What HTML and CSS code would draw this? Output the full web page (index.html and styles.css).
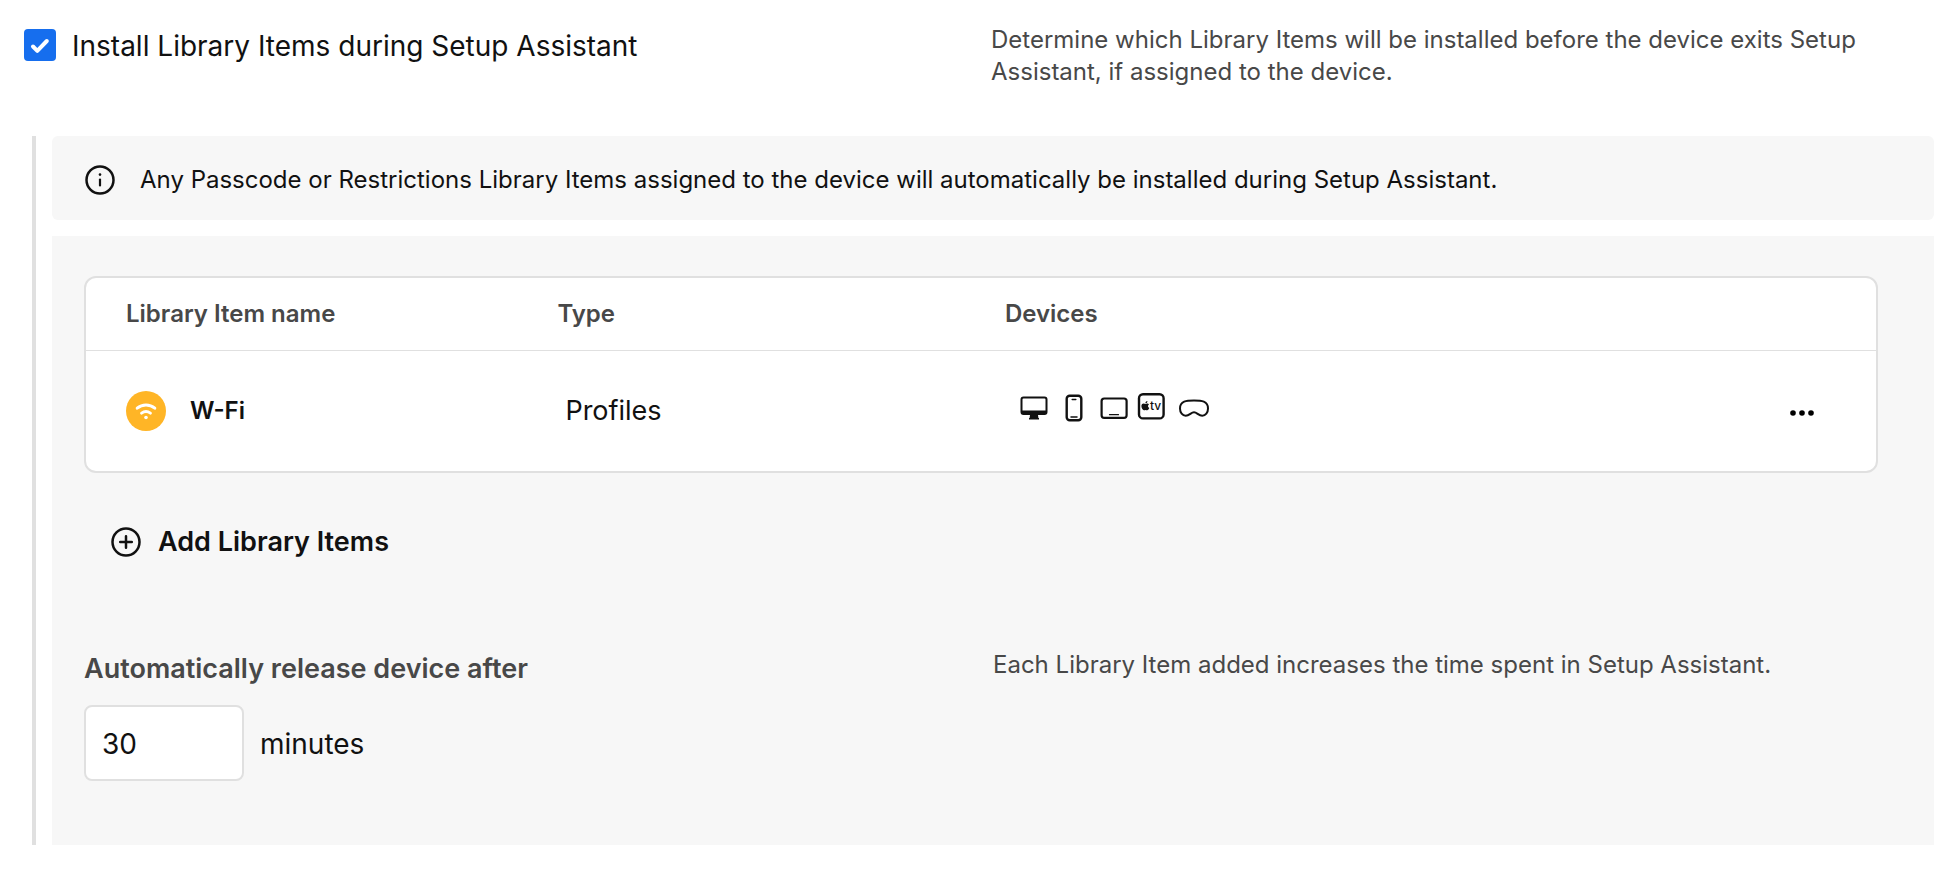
FILE: index.html
```html
<!DOCTYPE html>
<html lang="en">
<head>
    <meta charset="UTF-8">
    <meta name="viewport" content="width=device-width, initial-scale=1.0">
    <title>Setup Assistant</title>
    <link rel="stylesheet" href="styles.css">
</head>
<body>
    <div class="setting-row">
        <label class="check-label">
            <input type="checkbox" class="checkbox" checked>
            <span>Install Library Items during Setup Assistant</span>
        </label>
        <p class="description">Determine which Library Items will be installed before the device exits Setup Assistant, if assigned to the device.</p>
    </div>

    <div class="nested">
        <div class="notice">
            <svg class="icon" viewBox="0 0 30 30" aria-hidden="true">
                <circle cx="15" cy="15" r="13.5" fill="none" stroke="currentColor" stroke-width="2.5"/>
                <circle cx="15" cy="9.6" r="1.3" fill="currentColor"/>
                <path d="M15 14.5v6" stroke="currentColor" stroke-width="2.2" stroke-linecap="round"/>
            </svg>
            <p>Any Passcode or Restrictions Library Items assigned to the device will automatically be installed during Setup Assistant.</p>
        </div>

        <div class="panel">
            <div class="table-card">
                <table>
                    <thead>
                        <tr>
                            <th class="col-name">Library Item name</th>
                            <th class="col-type">Type</th>
                            <th class="col-devices">Devices</th>
                            <th class="col-actions"></th>
                        </tr>
                    </thead>
                    <tbody>
                        <tr>
                            <td>
                                <div class="item-name">
                                    <svg class="item-icon" viewBox="0 0 40 40" aria-hidden="true">
                                        <circle cx="20" cy="20" r="20" fill="#ffb526"/>
                                        <g fill="none" stroke="#fff" stroke-width="3" stroke-linecap="round">
                                            <path d="M11.2 17.2a13.5 13.5 0 0 1 17.6 0"/>
                                            <path d="M15.6 22.1a7.5 7.5 0 0 1 8.8 0"/>
                                        </g>
                                        <circle cx="20" cy="26.5" r="1.8" fill="#fff"/>
                                    </svg>
                                    <span>W-Fi</span>
                                </div>
                            </td>
                            <td class="item-type">Profiles</td>
                            <td>
                                <div class="devices">
                                    <svg width="28" height="30" viewBox="0 0 28 30" role="img" aria-label="Mac">
                                        <path fill-rule="evenodd" fill="currentColor" d="M3.500 3.500h21a3 3 0 0 1 3 3v12.500a3 3 0 0 1-3 3H18l.4 3H19v1.500H9V25h.6l.4-3H3.500a3 3 0 0 1-3-3V6.500a3 3 0 0 1 3-3zm0 1.900a1 1 0 0 0-1 1V17.500h23V6.400a1 1 0 0 0-1-1z"/>
                                    </svg>
                                    <svg width="18" height="30" viewBox="0 0 18 30" role="img" aria-label="iPhone">
                                        <rect x="1.7" y="2.7" width="14.6" height="24.6" rx="3" fill="none" stroke="currentColor" stroke-width="2.4"/>
                                        <path d="M7.2 6.4h3.6M6 24h6" stroke="currentColor" stroke-width="1.5" stroke-linecap="round"/>
                                    </svg>
                                    <svg width="28" height="30" viewBox="0 0 28 30" role="img" aria-label="iPad">
                                        <rect x="1.6" y="5.5" width="25" height="19.4" rx="2.6" fill="none" stroke="currentColor" stroke-width="2.2"/>
                                        <path d="M9.5 21.7h9" stroke="currentColor" stroke-width="1.2" stroke-linecap="round"/>
                                    </svg>
                                    <svg class="apple-tv" width="28" height="30" viewBox="0 0 28 30" role="img" aria-label="Apple TV">
                                        <rect x="2" y="1.2" width="24.6" height="24.2" rx="4" fill="none" stroke="currentColor" stroke-width="2.4"/>
                                        <path fill="currentColor" d="M8.5 10.9c.8 0 1.2-.5 2-.4.6 0 1.1.3 1.5.8-1.5 1-1.3 3 .3 3.700-.4 1.100-1.200 2.300-2.100 2.300-.6 0-.9-.4-1.600-.4s-1.100.4-1.700.4c-1.300 0-2.500-2.300-2.500-4.200 0-3.100 2.600-3 4.100-2.200zM8.400 10.300c-.1-1.200.8-2.300 2-2.400.1 1.200-.8 2.400-2 2.400z"/>
                                        <text class="tv-text" x="13" y="17">tv</text>
                                    </svg>
                                    <svg class="vision" width="30" height="30" viewBox="0 0 30 30" role="img" aria-label="Vision Pro">
                                        <path d="M15 7.500C22.500 7.500 29 8 29 15.500C29 19.700 26.500 22.800 23.300 22.800C19.500 22.800 18 19.200 15 19.200S10.500 22.800 6.700 22.800C3.500 22.800 1 19.700 1 15.500C1 8 7.500 7.500 15 7.500Z" fill="none" stroke="currentColor" stroke-width="2"/>
                                    </svg>
                                </div>
                            </td>
                            <td class="actions">
                                <button type="button" class="more-button" aria-label="More actions">
                                    <svg width="24" height="6" viewBox="0 0 24 6" aria-hidden="true">
                                        <circle cx="3" cy="3" r="2.8"/>
                                        <circle cx="12" cy="3" r="2.8"/>
                                        <circle cx="21" cy="3" r="2.8"/>
                                    </svg>
                                </button>
                            </td>
                        </tr>
                    </tbody>
                </table>
            </div>

            <button type="button" class="add-button">
                <svg class="icon" viewBox="0 0 30 30" aria-hidden="true">
                    <g fill="none" stroke="currentColor" stroke-width="2.5" stroke-linecap="round">
                        <circle cx="15" cy="15" r="13.5"/>
                        <path d="M15 9.2v11.6M9.2 15h11.6"/>
                    </g>
                </svg>
                Add Library Items
            </button>

            <div class="release-row">
                <div>
                    <label class="release-label" for="release-minutes">Automatically release device after</label>
                    <div class="minutes-field">
                        <input type="text" id="release-minutes" inputmode="numeric" value="30">
                        <span>minutes</span>
                    </div>
                </div>
                <p class="description">Each Library Item added increases the time spent in Setup Assistant.</p>
            </div>
        </div>
    </div>
</body>
</html>
```
FILE: styles.css
```css
* {
    box-sizing: border-box;
}

body {
    margin: 0;
    padding: 24px 16px 24px 24px;
    font-family: Inter, "Liberation Sans", sans-serif;
    font-size: 28px;
    line-height: 32px;
    color: #111;
    background: #fff;
}

p {
    margin: 0;
}

button, input {
    font: inherit;
    color: inherit;
}

.icon {
    width: 30px;
    height: 30px;
    flex: none;
}

.setting-row, .release-row {
    display: grid;
    grid-template-columns: 1fr 1fr;
    column-gap: 24px;
    align-items: start;
}

.check-label {
    display: flex;
    align-items: flex-start;
    gap: 16px;
    padding-top: 5px;
    line-height: 34px;
}

.checkbox {
    appearance: none;
    width: 32px;
    height: 32px;
    margin: 0;
    flex: none;
    border-radius: 4px;
    border: 2px solid #e0e0e0;
    background: #fff;
}

.checkbox:checked {
    border: none;
    background: #166eee url("data:image/svg+xml,%3Csvg xmlns='http://www.w3.org/2000/svg' viewBox='0 0 32 32'%3E%3Cpath d='M9 17.5l4.3 4.3L22.8 12' fill='none' stroke='%23fff' stroke-width='4' stroke-linecap='round' stroke-linejoin='round'/%3E%3C/svg%3E") center / contain no-repeat;
}

.description {
    font-size: 24px;
    color: #484848;
}

.nested {
    display: flex;
    flex-direction: column;
    gap: 16px;
    margin: 48px 0 0 8px;
    padding-left: 16px;
    border-left: 4px solid #e0e0e0;
}

.notice {
    display: flex;
    align-items: center;
    gap: 25px;
    padding: 28px 32px 24px 33px;
    font-size: 24px;
    background: #f7f7f7;
    border-radius: 6px;
}

.panel {
    padding: 40px 56px 64px 32px;
    background: #f7f7f7;
}

.table-card {
    background: #fff;
    border: 2px solid #e0e0e0;
    border-radius: 12px;
}

table {
    width: 100%;
    table-layout: fixed;
    border-collapse: collapse;
}

th {
    height: 72px;
    padding: 0 6px;
    font-size: 24px;
    font-weight: 600;
    text-align: left;
    color: #484848;
    border-bottom: 1px solid #e0e0e0;
}

td {
    height: 121px;
    padding: 0 14px;
}

th:first-child, td:first-child {
    padding-left: 40px;
}

.col-name {
    width: 26%;
}

.col-type {
    width: 25%;
}

.col-actions {
    width: 10%;
}

.item-name {
    display: flex;
    align-items: center;
    gap: 24px;
    font-size: 24px;
    font-weight: 600;
}

.item-icon {
    width: 40px;
    height: 40px;
}

.item-type {
    font-size: 27px;
}

.devices {
    display: flex;
    align-items: center;
    gap: 17px;
    padding: 0 0 6px 7px;
}

.apple-tv {
    margin-left: -8px;
}

.vision {
    margin-left: -3px;
}

.tv-text {
    font-size: 12px;
    font-weight: 500;
    fill: currentColor;
}

.actions {
    padding-right: 54px;
    text-align: right;
}

.more-button {
    display: inline-flex;
    padding: 8px;
    vertical-align: middle;
    border: none;
    background: none;
    cursor: pointer;
}

.add-button {
    display: flex;
    align-items: center;
    gap: 17px;
    margin-top: 49px;
    padding: 4px 27px;
    font-size: 27px;
    font-weight: 600;
    border: none;
    background: none;
    cursor: pointer;
}

.release-row {
    margin-top: 87px;
}

.release-label {
    display: block;
    padding-top: 4px;
    font-size: 27px;
    font-weight: 600;
    color: #484848;
}

.minutes-field {
    display: flex;
    align-items: center;
    gap: 16px;
    margin-top: 20px;
}

.minutes-field input {
    width: 160px;
    height: 76px;
    padding: 2px 16px 0;
    background: #fff;
    border: 2px solid #e0e0e0;
    border-radius: 8px;
}

.minutes-field span {
    padding-top: 2px;
}
```
